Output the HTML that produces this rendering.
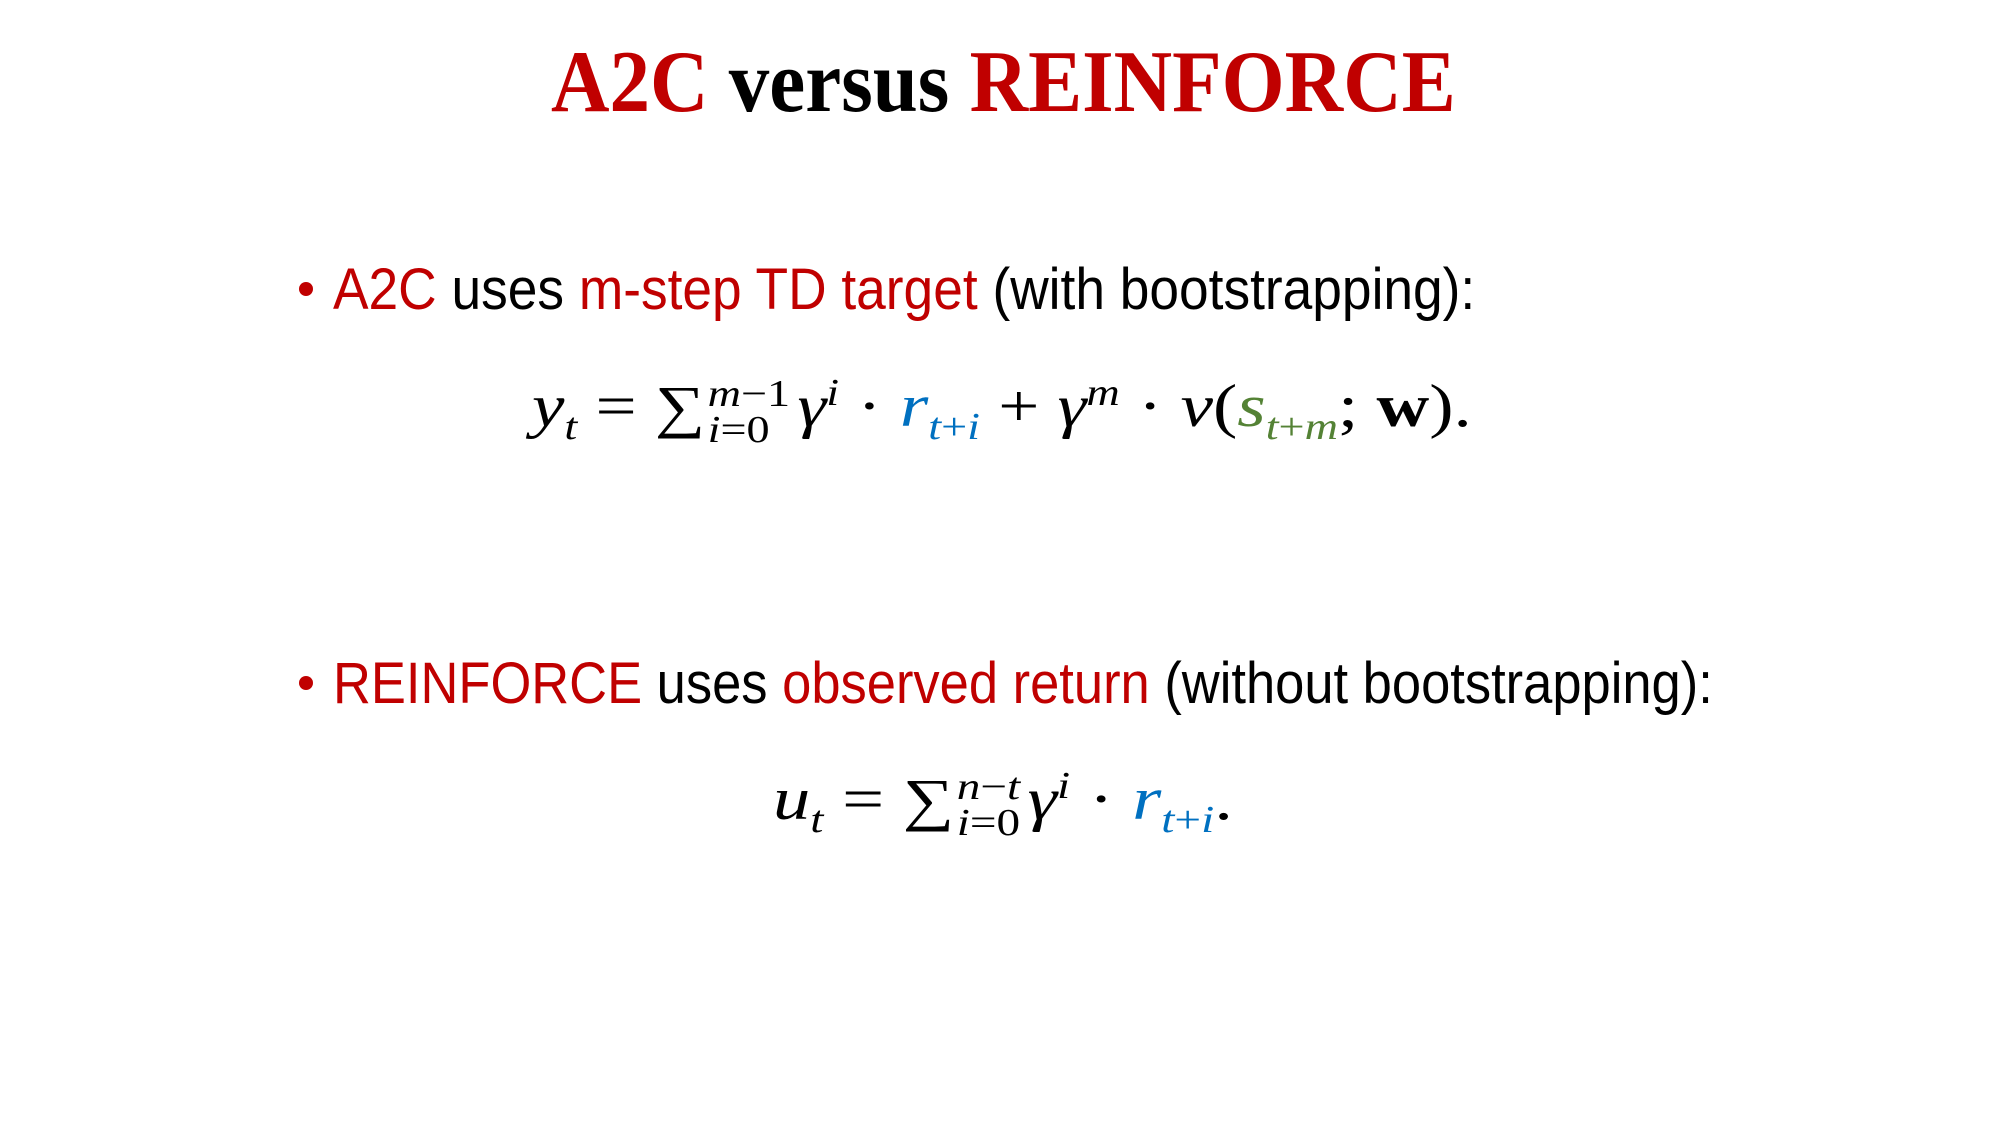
<!DOCTYPE html>
<html><head><meta charset="utf-8"><style>
html,body{margin:0;padding:0;background:#fff;}
body{width:2000px;height:1125px;position:relative;overflow:hidden;}
.l{position:absolute;white-space:nowrap;line-height:1;transform-origin:0 0;}
.r{color:#C00000}.b{color:#0070C0}.g{color:#548235}
.t{font-family:"Liberation Serif",serif;font-weight:bold;font-size:88px;}
.s{font-family:"Liberation Sans",sans-serif;font-size:58px;}
.m{font-family:"Liberation Serif",serif;font-size:60px;}
.m i{font-style:italic}
.ss{display:inline-block;vertical-align:middle;line-height:0.95;font-size:38px;text-align:left;margin:0 6px 0 2px;}
.ss span{display:block}
sub,sup{font-size:38px;line-height:0}
.dot{position:absolute;width:14px;height:14px;border-radius:50%;background:#C00000}
</style></head><body>
<div class="l t fit" data-w="905" style="left:551px;top:39px"><span class="r">A2C</span> versus <span class="r">REINFORCE</span></div>

<div class="dot" style="left:299px;top:282px"></div>
<div class="l s fit" data-w="1142" style="left:333px;top:261px"><span class="r">A2C</span> uses <span class="r">m-step TD target</span> (with bootstrapping):</div>

<div class="l m fit" data-w="940" style="left:532px;top:376px"><i>y</i><sub><i>t</i></sub> = <span style="font-size:58px">∑</span><span class="ss"><span><i>m</i>−1</span><span><i>i</i>=0</span></span><i>γ</i><sup><i>i</i></sup> · <span class="b"><i>r</i><sub><i>t</i>+<i>i</i></sub></span> + <i>γ</i><sup><i>m</i></sup> · <i>v</i>(<span class="g"><i>s</i><sub><i>t</i>+<i>m</i></sub></span>; <b>w</b>).</div>

<div class="dot" style="left:299px;top:676px"></div>
<div class="l s fit" data-w="1380" style="left:333px;top:655px"><span class="r">REINFORCE</span> uses <span class="r">observed return</span> (without bootstrapping):</div>

<div class="l m fit" data-w="460" style="left:773px;top:769px"><i>u</i><sub><i>t</i></sub> = <span style="font-size:58px">∑</span><span class="ss"><span><i>n</i>−<i>t</i></span><span><i>i</i>=0</span></span><i>γ</i><sup><i>i</i></sup> · <span class="b"><i>r</i><sub><i>t</i>+<i>i</i></sub></span>.</div>
<script>
document.querySelectorAll('.fit').forEach(function(e){var w=+e.getAttribute('data-w');var a=e.scrollWidth;if(a>0)e.style.transform='scaleX('+(w/a)+')';});
</script>
</body></html>
